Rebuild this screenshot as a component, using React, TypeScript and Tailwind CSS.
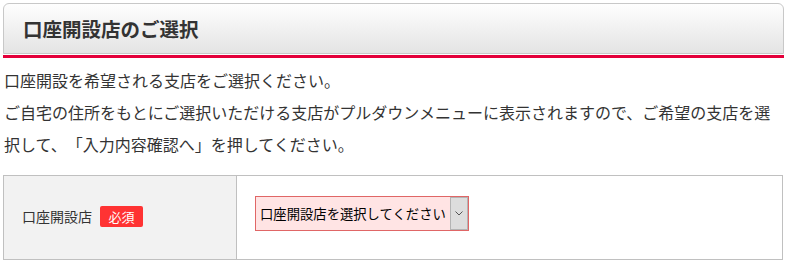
import React from "react";

export default function App() {
  const font = { fontFamily: '"Noto Sans CJK JP", "Noto Sans", sans-serif' };
  return (
    <div className="w-[788px] h-[264px] bg-white overflow-hidden text-[#333] [text-spacing-trim:space-all]" style={font}>
      <div className="ml-[3px] mt-[3px] w-[781px]">
        <div className="h-[51px] border border-[#c8c8c8] rounded-t-[6px] bg-gradient-to-b from-[#fefefe] to-[#e4e4e4] flex items-center pl-[19px]">
          <h1 className="text-[19.5px] font-bold text-[#333] leading-none">口座開設店のご選択</h1>
        </div>
        <div className="mt-[1px] h-[3px] bg-[#e4003a]" />
      </div>
      <div className="ml-[4px] mt-[6px] w-[780px] text-[16px] leading-[32px] text-[#333]">
        <p>口座開設を希望される支店をご選択ください。</p>
        <p>ご自宅の住所をもとにご選択いただける支店がプルダウンメニューに表示されますので、ご希望の支店を選択して、「入力内容確認へ」を押してください。</p>
      </div>
      <div className="ml-[3px] mt-[15px] w-[780px] h-[85px] border border-[#c0c0c0] flex">
        <div className="w-[233px] bg-[#f2f2f2] border-r border-[#c0c0c0] flex items-center pl-[18px] pb-[3px]">
          <span className="text-[14px] text-[#333]">口座開設店</span>
          <span className="ml-[8px] w-[43px] h-[21px] bg-[#ff3333] rounded-[2px] text-white text-[13px] flex items-center justify-center leading-none">
            必須
          </span>
        </div>
        <div className="flex-1 pl-[18px] pt-[20px]">
          <div className="w-[214px] h-[35px] border border-[#e06666] bg-[#ffe4e4] flex items-center">
            <span className="pl-[4px] text-[13.33px] text-black flex-1 whitespace-nowrap">口座開設店を選択してください</span>
            <div className="w-[18px] h-[33px] bg-[#dddddd] border border-[#b4b4b4] flex items-center justify-center">
              <svg width="8" height="5" viewBox="0 0 8 5" fill="none">
                <path d="M0.5 0.5 L4 4 L7.5 0.5" stroke="#555" strokeWidth="1" />
              </svg>
            </div>
          </div>
        </div>
      </div>
    </div>
  );
}
